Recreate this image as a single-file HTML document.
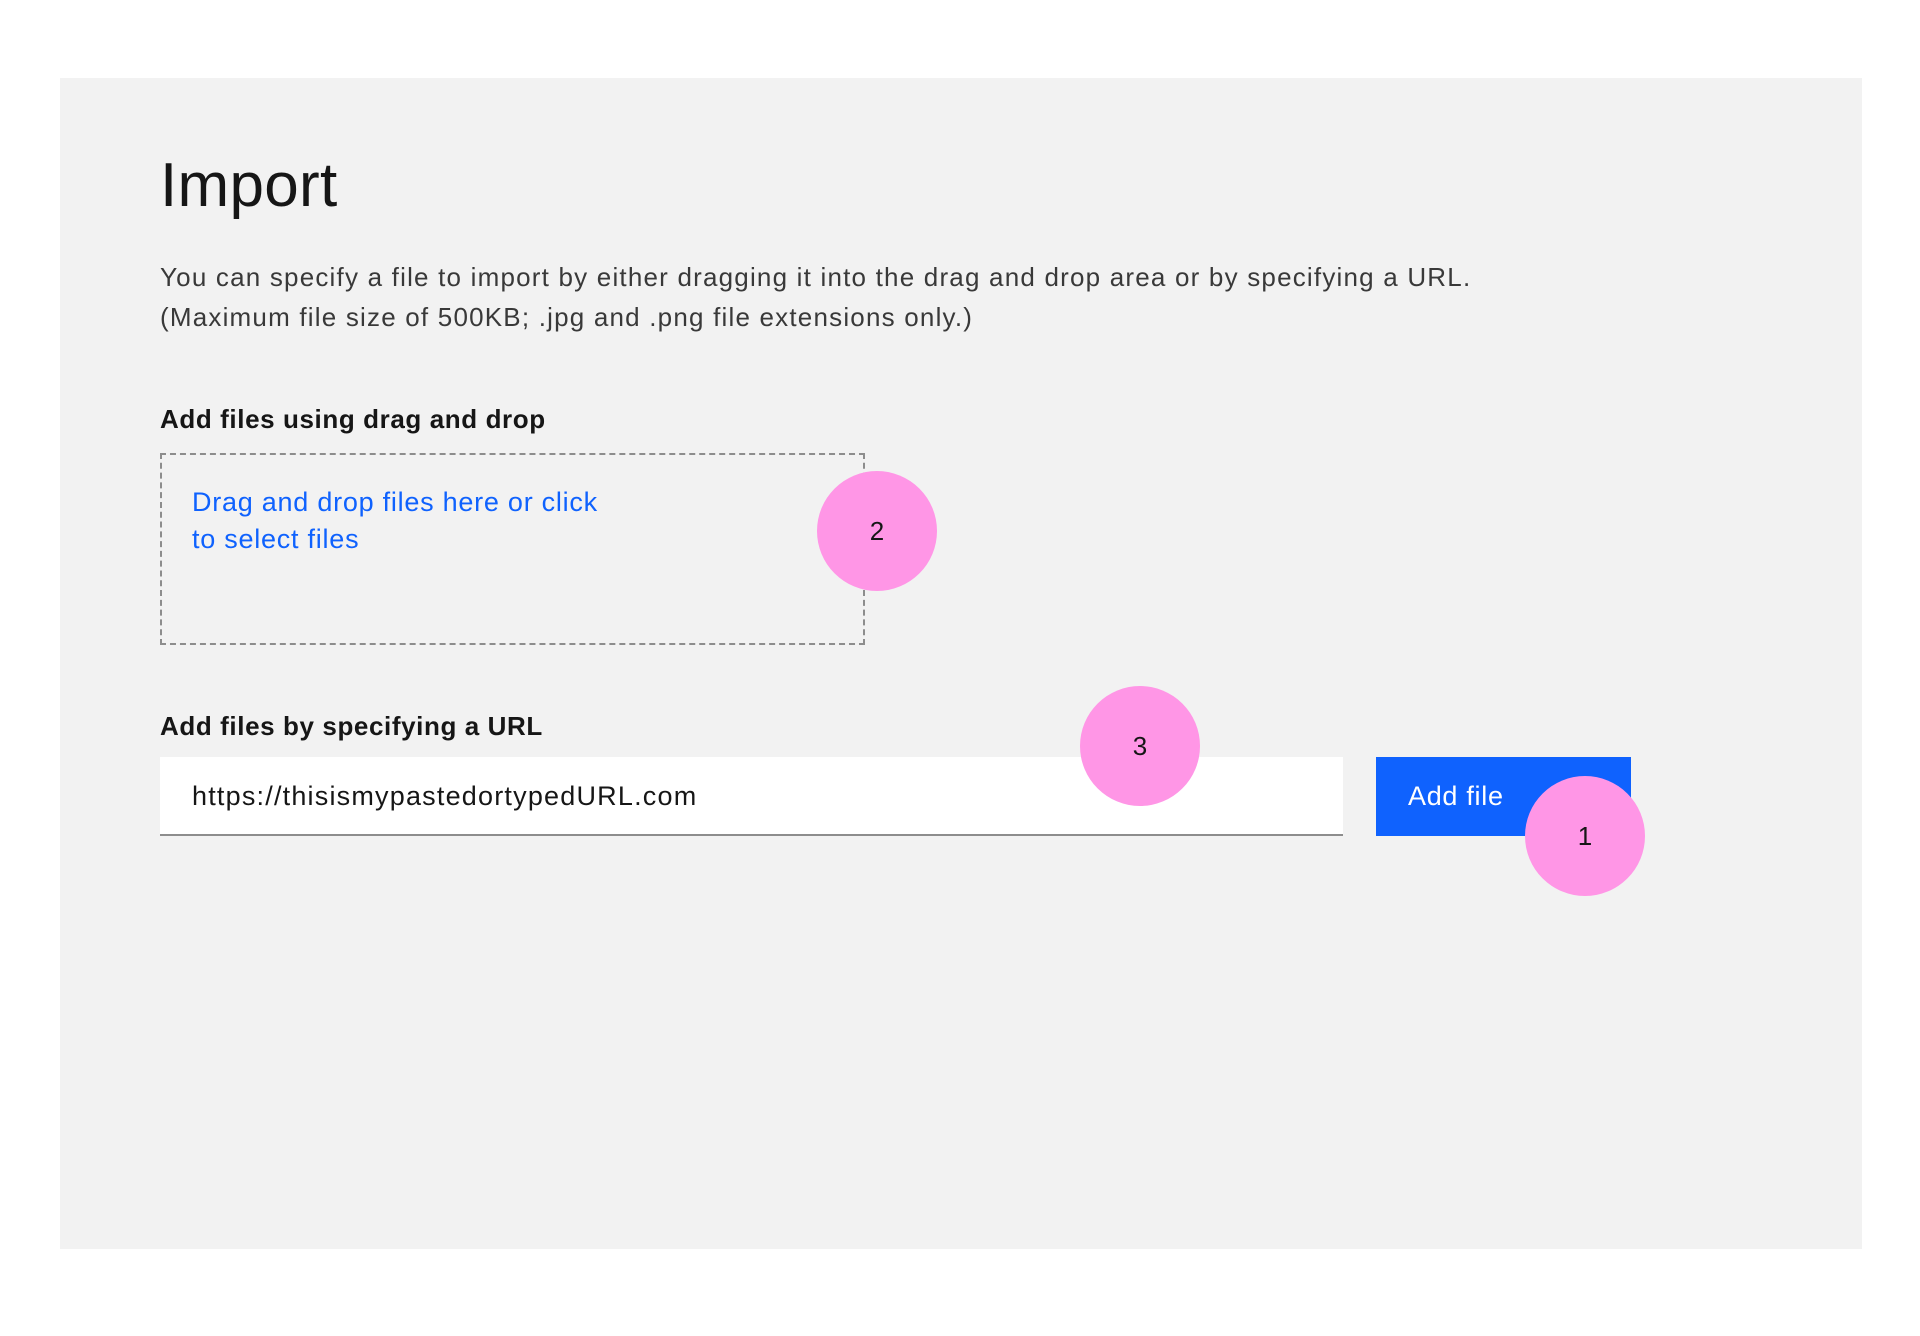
<!DOCTYPE html>
<html><head><style>
body{margin:0;width:1920px;height:1336px;background:#fff;font-family:"Liberation Sans",sans-serif;position:relative;overflow:hidden}
.p{position:absolute;left:60px;top:78px;width:1802px;height:1171px;background:#f2f2f2}
.a{position:absolute;white-space:nowrap}
.c{position:absolute;width:120px;height:120px;border-radius:50%;background:#ff96e6;color:#161616;font-size:26px;display:flex;align-items:center;justify-content:center}
</style></head><body>
<div class="p"></div>
<div class="a" style="left:160px;top:150px;font-size:62px;color:#161616;font-weight:300;letter-spacing:0.3px">Import</div>
<div class="a" style="left:160px;top:257px;font-size:26px;line-height:40px;color:#393939;letter-spacing:1.2px">You can specify a file to import by either dragging it into the drag and drop area or by specifying a URL.<br>(Maximum file size of 500KB; .jpg and .png file extensions only.)</div>
<div class="a" style="left:160px;top:404px;font-size:26px;font-weight:bold;color:#161616;letter-spacing:0.6px">Add files using drag and drop</div>
<div style="position:absolute;left:160px;top:453px;width:701px;height:188px;border:2px dashed #8d8d8d"></div>
<div class="a" style="left:192px;top:484px;font-size:27px;line-height:37px;color:#0f62fe;letter-spacing:0.75px">Drag and drop files here or click<br>to select files</div>
<div class="a" style="left:160px;top:711px;font-size:26px;font-weight:bold;color:#161616;letter-spacing:0.6px">Add files by specifying a URL</div>
<div style="position:absolute;left:160px;top:757px;width:1183px;height:77px;background:#fff;border-bottom:2px solid #8d8d8d"></div>
<div class="a" style="left:192px;top:781px;font-size:27px;color:#161616;letter-spacing:1.2px">https://thisismypastedortypedURL.com</div>
<div style="position:absolute;left:1376px;top:757px;width:255px;height:79px;background:#0f62fe"></div>
<div class="a" style="left:1408px;top:781px;font-size:27px;color:#fff;letter-spacing:0.7px">Add file</div>
<div class="c" style="left:817px;top:471px">2</div>
<div class="c" style="left:1080px;top:686px">3</div>
<div class="c" style="left:1525px;top:776px">1</div>
</body></html>
